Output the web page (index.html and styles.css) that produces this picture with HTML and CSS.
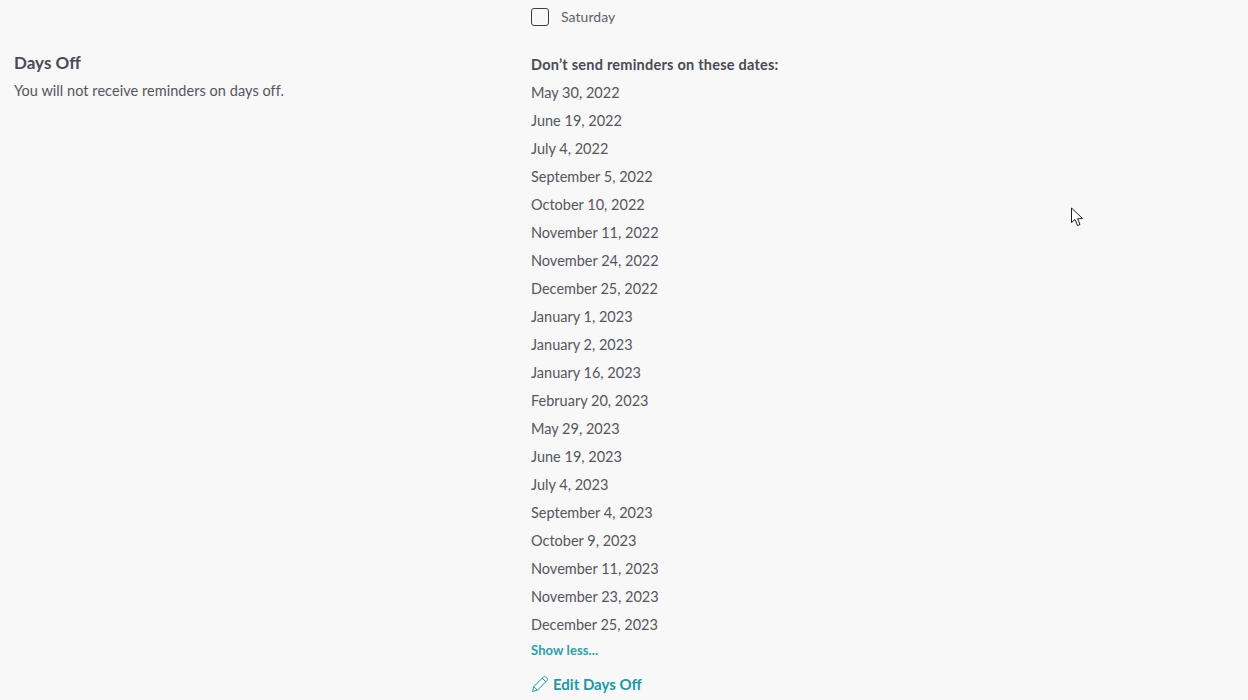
FILE: index.html
```html
<!DOCTYPE html>
<html lang="en">
<head>
    <meta charset="UTF-8">
    <meta name="viewport" content="width=device-width, initial-scale=1.0">
    <title>Days Off</title>
    <link rel="stylesheet" href="styles.css">
</head>
<body>
    <div class="settings">
        <div class="side-empty"></div>
        <div class="weekday">
            <span class="checkbox"></span>
            <span class="weekday-label">Saturday</span>
        </div>

        <div class="side">
            <h2 class="side-title">Days Off</h2>
            <p class="side-text">You will not receive reminders on days off.</p>
        </div>
        <div class="days-off">
            <div class="dates-title">Don’t send reminders on these dates:</div>
            <ul class="dates">
                <li>May 30, 2022</li>
                <li>June 19, 2022</li>
                <li>July 4, 2022</li>
                <li>September 5, 2022</li>
                <li>October 10, 2022</li>
                <li>November 11, 2022</li>
                <li>November 24, 2022</li>
                <li>December 25, 2022</li>
                <li>January 1, 2023</li>
                <li>January 2, 2023</li>
                <li>January 16, 2023</li>
                <li>February 20, 2023</li>
                <li>May 29, 2023</li>
                <li>June 19, 2023</li>
                <li>July 4, 2023</li>
                <li>September 4, 2023</li>
                <li>October 9, 2023</li>
                <li>November 11, 2023</li>
                <li>November 23, 2023</li>
                <li>December 25, 2023</li>
            </ul>
            <a class="show-less" href="#">Show less...</a>
            <a class="edit-link" href="#">
                <svg class="edit-icon" width="18" height="18" viewBox="0 0 18 18" fill="none" stroke="currentColor" stroke-width="1" stroke-linejoin="round">
                    <path d="M1.5 16.5 L2.8 11.6 L12.6 1.8 Q13.6 0.9 14.6 1.8 L16.2 3.4 Q17.1 4.4 16.2 5.4 L6.4 15.2 Z"/>
                    <path d="M11.2 3.2 L14.8 6.8"/>
                    <path d="M2.8 11.6 L6.4 15.2"/>
                </svg>
                Edit Days Off
            </a>
        </div>
    </div>

    <svg class="cursor" width="14" height="20" viewBox="0 0 14 20">
        <path d="M1.5 1 L1.5 15.5 L5 12.5 L7.5 18.5 L10 17.5 L7.6 11.8 L12.5 11.5 Z" fill="#fff" stroke="#1a1a2a" stroke-width="1"/>
    </svg>
</body>
</html>
```

FILE: styles.css
```css
body {
    font-family: Lato, "Open Sans", sans-serif;
    margin: 0;
    height: 700px;
    overflow: hidden;
    background-color: #f8f8f8;
    color: #55555f;
    font-size: 14.5px;
}
.settings {
    display: grid;
    grid-template-columns: 517px 1fr;
    padding: 8px 14px 0;
}
.weekday {
    display: flex;
    align-items: center;
    gap: 12px;
    height: 18px;
    margin-bottom: 28px;
}
.checkbox {
    width: 16px;
    height: 16px;
    border: 1px solid #3d3d48;
    border-radius: 3px;
    background-color: #f8f8f8;
}
.weekday-label {
    font-size: 14px;
    letter-spacing: 0.05px;
    margin-bottom: 2px;
    color: #5f5f6a;
}
.side-title {
    margin: 0;
    font-size: 17px;
    font-weight: 700;
    line-height: 20px;
    margin-top: -1px;
    color: #4a4a55;
}
.side-text {
    margin: 8px 0 0;
    line-height: 20px;
    letter-spacing: 0.05px;
}
.dates-title {
    font-weight: 700;
    line-height: 20px;
    margin-top: 1px;
    letter-spacing: 0.23px;
    color: #4a4a55;
}
.dates {
    list-style: none;
    margin: 0;
    padding: 4px 0 0;
}
.dates li {
    height: 28px;
    line-height: 28px;
}
.show-less {
    display: block;
    font-size: 13px;
    font-weight: 700;
    line-height: 20px;
    margin-top: 1px;
    letter-spacing: 0.1px;
    color: #2a9fac;
    text-decoration: none;
}
.edit-link {
    display: flex;
    align-items: center;
    gap: 4px;
    margin-top: 14px;
    font-size: 15px;
    font-weight: 700;
    line-height: 20px;
    color: #1c98a6;
    text-decoration: none;
}
.edit-icon {
    flex: none;
}
.cursor {
    position: absolute;
    left: 1070px;
    top: 207px;
}
```
